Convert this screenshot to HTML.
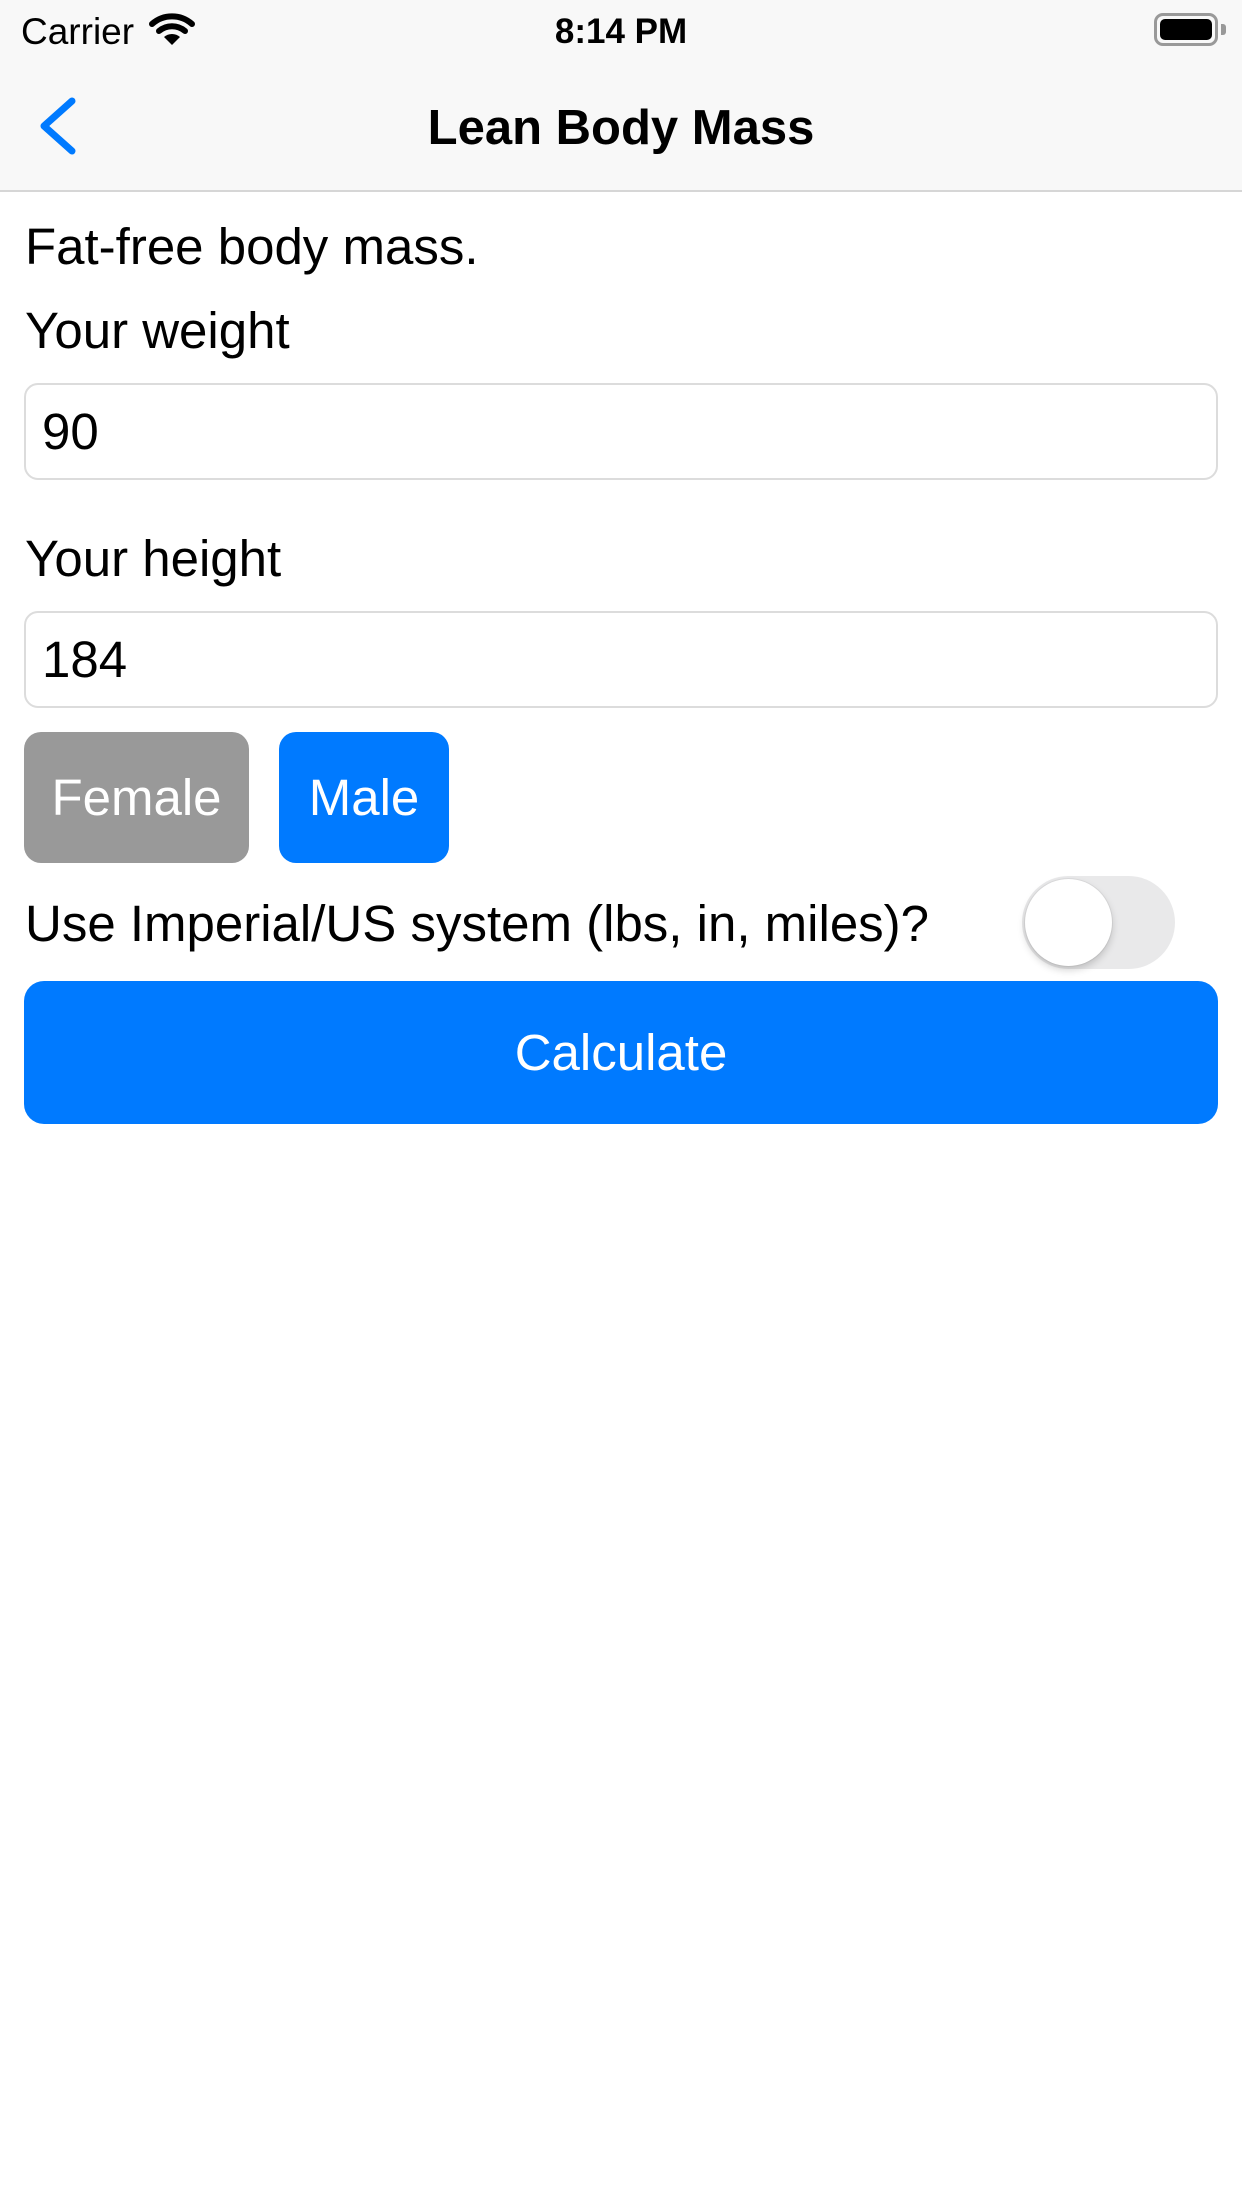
<!DOCTYPE html>
<html><head><meta charset="utf-8"><style>
*{margin:0;padding:0;box-sizing:border-box}
body{width:1242px;height:2208px;background:#fff;font-family:"Liberation Sans",sans-serif;position:relative;overflow:hidden;color:#000}
.a{position:absolute;white-space:nowrap}
.nav{position:absolute;left:0;top:0;width:1242px;height:192px;background:#f8f8f8;border-bottom:2px solid #d6d6d6}
.lbl{font-size:51px;line-height:60px;left:25px}
.inp{position:absolute;left:24px;width:1194px;border:2px solid #dcdcdc;border-radius:14px;background:#fff}
.inp span{position:absolute;left:16px;font-size:51px;line-height:60px;top:17px}
.btn{position:absolute;top:732px;height:131px;border-radius:17px;color:#fff;font-size:51px;text-align:center;line-height:131px}
</style></head><body>
<div class="nav"></div>
<div class="a" style="left:21px;top:10px;font-size:37px;line-height:44px">Carrier</div>
<svg class="a" style="left:148px;top:12px" width="48" height="36" viewBox="0 0 48 36">
<path d="M4 12 A30 30 0 0 1 44 12" stroke="#000" stroke-width="6" fill="none" stroke-linecap="round"/>
<path d="M11 19 A20 20 0 0 1 37 19" stroke="#000" stroke-width="6" fill="none" stroke-linecap="round"/>
<path d="M24 33 L16 25 A12 12 0 0 1 32 25 Z" fill="#000"/>
</svg>
<div class="a" style="left:0;width:1242px;text-align:center;top:10px;font-size:35px;line-height:44px;font-weight:bold">8:14 PM</div>
<div class="a" style="left:1154px;top:13px;width:64px;height:33px;border:3px solid #999;border-radius:9px;padding:3px"><div style="width:100%;height:100%;background:#000;border-radius:5px"></div></div>
<div class="a" style="left:1221px;top:24px;width:5px;height:11px;background:#999;border-radius:0 3px 3px 0"></div>
<svg class="a" style="left:36px;top:95px" width="46" height="62"><path d="M36 6 L8 31 L36 56" stroke="#007aff" stroke-width="7" fill="none" stroke-linecap="round" stroke-linejoin="round"/></svg>
<div class="a" style="left:0;width:1242px;text-align:center;top:98px;font-size:49px;line-height:60px;font-weight:bold">Lean Body Mass</div>
<div class="a lbl" style="top:217px">Fat-free body mass.</div>
<div class="a lbl" style="top:301px">Your weight</div>
<div class="inp" style="top:383px;height:97px"><span>90</span></div>
<div class="a lbl" style="top:529px">Your height</div>
<div class="inp" style="top:611px;height:97px"><span>184</span></div>
<div class="btn" style="left:24px;width:225px;background:#999">Female</div>
<div class="btn" style="left:279px;width:170px;background:#007aff">Male</div>
<div class="a lbl" style="top:894px">Use Imperial/US system (lbs, in, miles)?</div>
<div class="a" style="left:1022px;top:876px;width:153px;height:93px;border-radius:47px;background:#e9e9ea"></div>
<div class="a" style="left:1025px;top:879px;width:87px;height:87px;border-radius:50%;background:#fff;box-shadow:0 4px 8px rgba(0,0,0,.18),0 0 0 1px rgba(0,0,0,.05)"></div>
<div class="a" style="left:24px;top:981px;width:1194px;height:143px;border-radius:20px;background:#007aff;color:#fff;font-size:51px;text-align:center;line-height:143px">Calculate</div>
</body></html>
